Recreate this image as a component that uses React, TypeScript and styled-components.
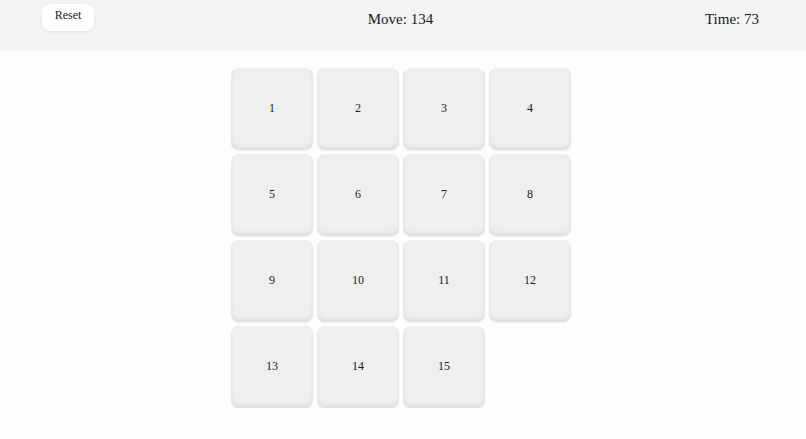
import React, { useState } from "react";
import styled, { createGlobalStyle } from "styled-components";

const GlobalStyle = createGlobalStyle`
  html, body {
    margin: 0;
    padding: 0;
    background: #fdfdfd;
    font-family: "Liberation Serif", "DejaVu Serif", serif;
    color: #222;
  }
`;

const Header = styled.header`
  height: 49px;
  background: #f4f4f4;
  box-shadow: 0 1px 3px rgba(0, 0, 0, 0.08);
  display: grid;
  grid-template-columns: 1fr auto 1fr;
  align-items: start;
  padding: 0 47px 0 42px;
`;

const ResetButton = styled.button`
  justify-self: start;
  margin-top: 4px;
  width: 52px;
  height: 27px;
  border: none;
  border-radius: 8px;
  background: #fff;
  box-shadow: 0 1px 4px rgba(0, 0, 0, 0.08);
  font-family: inherit;
  font-size: 12px;
  color: #222;
  cursor: pointer;
  padding: 0 0 4px;
`;

const Stat = styled.div<{ $align: "center" | "end" }>`
  justify-self: ${(p) => p.$align};
  margin-top: 11px;
  font-size: 15px;
  line-height: 17px;
  color: #1a1a1a;
`;

const Board = styled.main`
  display: grid;
  grid-template-columns: repeat(4, 82px);
  grid-auto-rows: 82px;
  gap: 4px;
  width: 340px;
  margin: 19px auto 0;
  padding-right: 4px;
`;

const Tile = styled.div`
  display: flex;
  align-items: center;
  justify-content: center;
  border-radius: 8px;
  background: #efefef;
  box-shadow: inset 0 -3px 4px rgba(0, 0, 0, 0.07), 0 1px 2px rgba(0, 0, 0, 0.06);
  font-size: 12px;
  color: #222;
  padding-bottom: 1px;
  box-sizing: border-box;
`;

const Empty = styled.div``;

export default function App() {
  const [tiles] = useState<number[]>([1, 2, 3, 4, 5, 6, 7, 8, 9, 10, 11, 12, 13, 14, 15, 0]);

  return (
    <>
      <GlobalStyle />
      <Header>
        <ResetButton>Reset</ResetButton>
        <Stat $align="center">Move: 134</Stat>
        <Stat $align="end">Time: 73</Stat>
      </Header>
      <Board>
        {tiles.map((n) => (n ? <Tile key={n}>{n}</Tile> : <Empty key="empty" />))}
      </Board>
    </>
  );
}
